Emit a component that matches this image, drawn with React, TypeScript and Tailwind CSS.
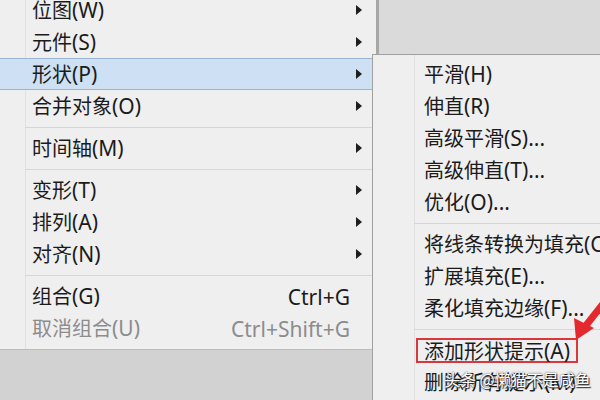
import React from "react";

const font = { fontFamily: '"Noto Sans", "Noto Sans CJK SC", sans-serif' };

function T({ text, className = "" }: { text: string; className?: string }) {
  const parts = text.split(/([\x00-\x7f]+)/).filter((p) => p.length > 0);
  return (
    <span className={"leading-none whitespace-nowrap " + className}>
      {parts.map((p, i) =>
        /^[\x00-\x7f]+$/.test(p) ? (
          <span key={i} className="text-[21px]">
            {p}
          </span>
        ) : (
          <span key={i} className="text-[20px]" style={{ fontFamily: '"Noto Sans CJK SC", sans-serif' }}>
            {p}
          </span>
        )
      )}
    </span>
  );
}

function Arrow() {
  return (
    <svg width="6" height="10" viewBox="0 0 6 10" className="shrink-0">
      <polygon points="0,0 6,5 0,10" fill="#1e1e1e" />
    </svg>
  );
}

function Row({
  label,
  sub,
  shortcut,
  disabled,
  active,
}: {
  label: string;
  sub?: boolean;
  shortcut?: string;
  disabled?: boolean;
  active?: boolean;
}) {
  const color = disabled ? "text-[#8c8c8c]" : "text-[#1b1b1b]";
  return (
    <div
      className={
        "h-[32px] flex items-center pl-[32px] pr-[14px] " +
        (active ? "bg-[#cde0f4] border-y border-[#9ab4d4]" : "")
      }
    >
      <div className="flex-1 pt-[3px]">
        <T text={label} className={color} />
      </div>
      {shortcut && <T text={shortcut} className={"mr-[12px] pt-[3px] " + color} />}
      {sub && <Arrow />}
    </div>
  );
}

function Sep({ left = 25 }: { left?: number }) {
  return (
    <div className="h-[10px] flex items-center">
      <div className="h-px w-full bg-[#d6d6d6]" style={{ marginLeft: left }} />
    </div>
  );
}

function SubRow({ label, boxed }: { label: string; boxed?: boolean }) {
  return (
    <div className="h-[32px] flex items-center pl-[51px]">
      {boxed ? (
        <span className="ml-[-8px] border-2 border-[#d8383c] px-[6px] h-[25px] flex items-center pt-[2px]">
          <T text={label} className="text-[#1b1b1b]" />
        </span>
      ) : (
        <span className="pt-[3px]">
          <T text={label} className="text-[#1b1b1b]" />
        </span>
      )}
    </div>
  );
}

export default function App() {
  return (
    <div className="relative w-[600px] h-[400px] overflow-hidden bg-[#dadada]" style={font}>
      <div className="flex flex-col h-full">
        {/* main menu */}
        <div className="relative w-[379px] h-[349px] bg-[#f0eff0] border-r-[3px] border-[#a7a7a7] overflow-hidden">
          <div className="absolute left-[25px] top-0 bottom-0 w-px bg-[#e0e0e0]" />
          <div className="relative mt-[-6px] flex flex-col">
            <Row label="位图(W)" sub />
            <Row label="元件(S)" sub />
            <Row label="形状(P)" sub active />
            <Row label="合并对象(O)" sub />
            <Sep />
            <Row label="时间轴(M)" sub />
            <Sep />
            <Row label="变形(T)" sub />
            <Row label="排列(A)" sub />
            <Row label="对齐(N)" sub />
            <Sep />
            <Row label="组合(G)" shortcut="Ctrl+G" />
            <Row label="取消组合(U)" shortcut="Ctrl+Shift+G" disabled />
          </div>
        </div>
        <div className="flex-1 bg-[#d3d2d3] border-t border-[#bcbcbc] w-[376px]" />
      </div>

      {/* submenu */}
      <div className="absolute left-[372px] top-[54px] w-[260px] h-[360px] bg-[#f0eff0] border-l border-t border-[#a0a0a0] pt-[3px]">
        <div className="absolute left-[41px] top-0 bottom-0 w-px bg-[#e0e0e0]" />
        <div className="relative flex flex-col">
          <SubRow label="平滑(H)" />
          <SubRow label="伸直(R)" />
          <SubRow label="高级平滑(S)..." />
          <SubRow label="高级伸直(T)..." />
          <SubRow label="优化(O)..." />
          <Sep left={41} />
          <SubRow label="将线条转换为填充(C)" />
          <SubRow label="扩展填充(E)..." />
          <SubRow label="柔化填充边缘(F)..." />
          <Sep left={41} />
          <SubRow label="添加形状提示(A)" boxed />
          <SubRow label="删除所有提示(M)" />
        </div>
      </div>

      {/* red arrow */}
      <svg className="absolute left-[560px] top-[290px]" width="40" height="56" viewBox="0 0 40 56">
        <line x1="46" y1="10" x2="24" y2="38" stroke="#e3292e" strokeWidth="7" />
        <polygon points="16,50 14,28 34,38" fill="#e3292e" />
      </svg>

      {/* watermark */}
      <div
        className="absolute left-[444px] top-[371px] text-[16px] leading-none text-white whitespace-nowrap"
        style={{ textShadow: "0 0 2px #333, 1px 1px 1px #222", fontFamily: '"Noto Sans CJK SC", sans-serif' }}
      >
        头条 @懒猫不是咸鱼
      </div>
    </div>
  );
}
